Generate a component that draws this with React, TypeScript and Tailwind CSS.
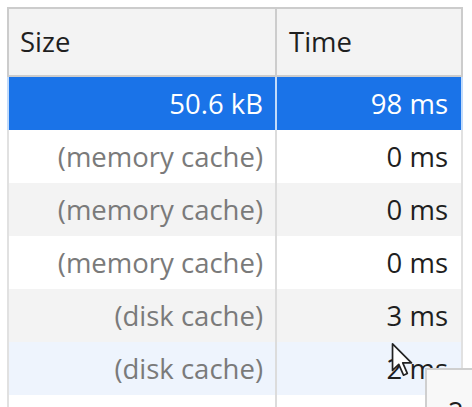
import React from "react";

type Row = { size: string; time: string; kind: "sel" | "white" | "gray" | "hover" };

const rows: Row[] = [
  { size: "50.6 kB", time: "98 ms", kind: "sel" },
  { size: "(memory cache)", time: "0 ms", kind: "white" },
  { size: "(memory cache)", time: "0 ms", kind: "gray" },
  { size: "(memory cache)", time: "0 ms", kind: "white" },
  { size: "(disk cache)", time: "3 ms", kind: "gray" },
  { size: "(disk cache)", time: "2 ms", kind: "hover" },
];

function BodyRow({ r }: { r: Row }) {
  const sel = r.kind === "sel";
  const bg =
    r.kind === "sel"
      ? "bg-[#1a73e8] border-[#c2dbfa]"
      : r.kind === "gray"
      ? "bg-[#f3f3f3] border-[#e1e1e1]"
      : r.kind === "hover"
      ? "bg-[#eef4fd] border-[#e1e1e1]"
      : "bg-white border-[#e1e1e1]";
  return (
    <div className={`flex h-[53px] border-l-2 border-r-2 ${bg}`}>
      <div
        className={`w-[268px] shrink-0 flex items-center justify-end pr-[12px] border-r-2 ${
          sel ? "border-[#c2dbfa] text-white" : "border-[#dcdcdc] text-[#7a7a7a]"
        }`}
      >
        {r.size}
      </div>
      <div
        className={`flex-1 flex items-center justify-end pr-[13px] ${
          sel ? "text-white" : "text-[#1f1f1f]"
        }`}
      >
        {r.time}
      </div>
    </div>
  );
}

export default function App() {
  return (
    <div
      className="relative w-[472px] h-[407px] overflow-hidden bg-white"
      style={{ fontFamily: '"Open Sans", "Noto Sans", sans-serif' }}
    >
      <div className="ml-[7px] mt-[7px] w-[456px] text-[27.5px] leading-none">
        <div className="flex h-[70px] bg-[#f3f3f3] border-2 border-[#cccccc] text-[#1f1f1f]">
          <div className="w-[268px] shrink-0 flex items-center pl-[11px] border-r-2 border-[#cccccc]">
            Size
          </div>
          <div className="flex-1 flex items-center pl-[12px]">Time</div>
        </div>
        {rows.map((r, i) => (
          <BodyRow key={i} r={r} />
        ))}
        <div className="flex h-[12px] border-l-2 border-r-2 border-[#e1e1e1] bg-white">
          <div className="w-[268px] shrink-0 border-r-2 border-[#dcdcdc]" />
          <div className="flex-1" />
        </div>
      </div>

      {/* tooltip */}
      <div className="absolute left-[425px] top-[368px] w-[60px] h-[50px] bg-[#f8f8f8] border-l-2 border-t-2 border-[#cfcfcf] text-[27.5px] text-[#1f1f1f] pl-[21px] pt-[28px] leading-none">
        2
      </div>

      {/* cursor */}
      <svg
        className="absolute left-[390px] top-[342px]"
        width="24"
        height="36"
        viewBox="0 0 12 19"
      >
        <path
          d="M1 1 L1 15 L4.3 11.8 L6.8 17.5 L8.8 16.6 L6.4 11 L11 11 Z"
          fill="white"
          stroke="#222"
          strokeWidth="0.9"
          strokeLinejoin="round"
        />
      </svg>
    </div>
  );
}
